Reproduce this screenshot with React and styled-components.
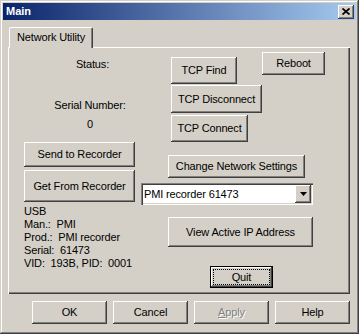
import React from 'react';
import styled, { createGlobalStyle } from 'styled-components';

const GlobalStyle = createGlobalStyle`
  html, body {
    margin: 0;
    padding: 0;
    background: #d4d0c8;
  }

  body {
    font-family: "Liberation Sans", Arial, sans-serif;
    font-size: 11px;
    letter-spacing: -0.15px;
    color: #000;
  }
`;

const raised = `
  box-shadow:
    inset -1px -1px 0 #404040,
    inset 1px 1px 0 #ffffff,
    inset -2px -2px 0 #808080,
    inset 2px 2px 0 #d4d0c8;
`;

const Window = styled.div`
  width: 359px;
  height: 334px;
  box-sizing: border-box;
  padding: 3px;
  display: flex;
  flex-direction: column;
  background: #d4d0c8;
  box-shadow:
    inset -1px -1px 0 #404040,
    inset 1px 1px 0 #d4d0c8,
    inset -2px -2px 0 #808080,
    inset 2px 2px 0 #ffffff;
`;

const TitleBar = styled.div`
  height: 17px;
  display: flex;
  align-items: center;
  justify-content: space-between;
  padding: 0 2px 0 3px;
  background: linear-gradient(to right, #0a246a, #a6caf0);
`;

const Title = styled.span`
  font-weight: bold;
  color: #fff;
  letter-spacing: 0;
  line-height: 13px;
`;

const CloseButton = styled.div`
  width: 16px;
  height: 14px;
  display: flex;
  align-items: center;
  justify-content: center;
  background: #d4d0c8;
  ${raised}
`;

const Content = styled.div`
  padding: 7px 6px 0 5px;
  display: flex;
  flex-direction: column;
`;

const TabStrip = styled.div`
  display: flex;
  padding-left: 1px;
  position: relative;
  z-index: 1;
  margin-bottom: -1px;
`;

const Tab = styled.div`
  width: 84px;
  height: 21px;
  box-sizing: border-box;
  border: 1px solid #fff;
  border-bottom: none;
  border-right-color: #404040;
  border-radius: 2px 2px 0 0;
  box-shadow: inset -1px 0 0 #808080;
  background: #d4d0c8;
  text-align: center;
  padding-top: 3px;
  line-height: 13px;
`;

const Panel = styled.div`
  height: 247px;
  box-sizing: border-box;
  padding: 5px 0 0 16px;
  display: grid;
  grid-template-columns: 117px 1fr;
  align-items: start;
  box-shadow:
    inset 1px 1px 0 #ffffff,
    inset -1px -1px 0 #404040,
    inset -2px -2px 0 #808080;
`;

const Column = styled.div`
  display: flex;
  flex-direction: column;
  align-items: flex-start;
`;

const Caption = styled.div`
  width: 117px;
  box-sizing: border-box;
  padding-left: ${p => p.$shift || 15}px;
  margin-top: ${p => p.$top || 0}px;
  text-align: center;
  line-height: 13px;
`;

const Button = styled.button`
  width: ${p => p.$w}px;
  height: ${p => p.$h}px;
  margin-top: ${p => p.$top || 0}px;
  margin-left: ${p => p.$left || 0}px;
  flex-shrink: 0;
  padding: 0;
  border: 0;
  background: #d4d0c8;
  font: inherit;
  letter-spacing: inherit;
  line-height: 13px;
  color: #000;
  ${raised}
`;

const DefaultButton = styled(Button)`
  position: relative;
  border: 1px solid #000;

  &::after {
    content: '';
    position: absolute;
    inset: 2px;
    border: 1px dotted #000;
  }
`;

const DisabledButton = styled(Button)`
  color: #808080;
  text-shadow: 1px 1px 0 #fff;
`;

const Info = styled.div`
  margin-top: 3px;
  line-height: 13px;
  white-space: pre;
`;

const TopRow = styled.div`
  display: flex;
  align-items: flex-start;
`;

const Combo = styled.div`
  width: 172px;
  height: 22px;
  margin-top: 5px;
  box-sizing: border-box;
  padding: 2px;
  display: flex;
  align-items: center;
  background: #fff;
  box-shadow:
    inset 1px 1px 0 #808080,
    inset 2px 2px 0 #404040,
    inset -1px -1px 0 #ffffff,
    inset -2px -2px 0 #d4d0c8;
`;

const ComboValue = styled.span`
  flex: 1;
  padding-left: 1px;
  line-height: 13px;
`;

const ComboArrow = styled.div`
  width: 16px;
  height: 18px;
  display: flex;
  align-items: center;
  justify-content: center;
  background: #d4d0c8;
  ${raised}
`;

const ButtonRow = styled.div`
  display: flex;
  justify-content: flex-end;
  gap: 6px;
  margin-top: 7px;
`;

export default function App() {
  return (
    <>
      <GlobalStyle />
      <Window>
        <TitleBar>
          <Title>Main</Title>
          <CloseButton>
            <svg width="8" height="7" viewBox="0 0 8 7">
              <path d="M0.5 0.5 L7.5 6.5 M7.5 0.5 L0.5 6.5" stroke="#000" strokeWidth="1.7" />
            </svg>
          </CloseButton>
        </TitleBar>

        <Content>
          <TabStrip>
            <Tab>Network Utility</Tab>
          </TabStrip>

          <Panel>
            <Column>
              <Caption $top={6} $shift={20}>Status:</Caption>
              <Caption $top={28}>Serial Number:</Caption>
              <Caption $top={6}>0</Caption>
              <Button $w={111} $h={25} $top={11}>Send to Recorder</Button>
              <Button $w={111} $h={32} $top={3}>Get From Recorder</Button>
              <Info>
                {'USB\nMan.:  PMI\nProd.:  PMI recorder\nSerial:  61473\nVID:  193B, PID:  0001'}
              </Info>
            </Column>

            <Column>
              <TopRow>
                <Button $w={66} $h={27} $top={5} $left={30}>TCP Find</Button>
                <Button $w={63} $h={23} $left={25}>Reboot</Button>
              </TopRow>
              <Button $w={91} $h={28} $top={1} $left={30}>TCP Disconnect</Button>
              <Button $w={77} $h={27} $top={2} $left={30}>TCP Connect</Button>
              <Button $w={137} $h={23} $top={13} $left={27}>Change Network Settings</Button>
              <Combo>
                <ComboValue>PMI recorder 61473</ComboValue>
                <ComboArrow>
                  <svg width="7" height="4" viewBox="0 0 7 4">
                    <path d="M0 0 H7 L3.5 4 Z" fill="#000" />
                  </svg>
                </ComboArrow>
              </Combo>
              <Button $w={145} $h={30} $top={12} $left={27}>View Active IP Address</Button>
              <DefaultButton $w={63} $h={22} $top={19} $left={69}>Quit</DefaultButton>
            </Column>
          </Panel>

          <ButtonRow>
            <Button $w={75} $h={23}>OK</Button>
            <Button $w={75} $h={23}>Cancel</Button>
            <DisabledButton $w={75} $h={23} disabled>
              <u>A</u>pply
            </DisabledButton>
            <Button $w={75} $h={23}>Help</Button>
          </ButtonRow>
        </Content>
      </Window>
    </>
  );
}
